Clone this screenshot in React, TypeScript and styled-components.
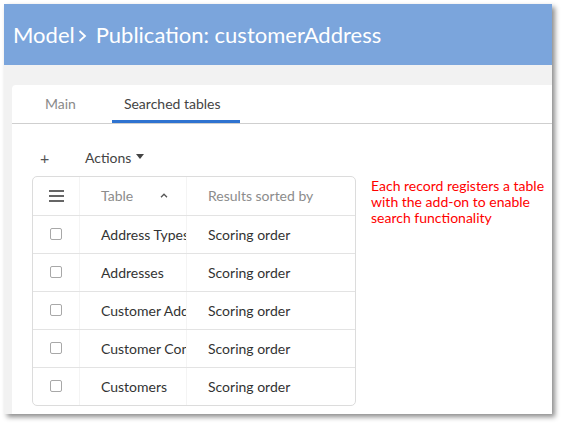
import React from "react";
import styled, { createGlobalStyle } from "styled-components";

const Global = createGlobalStyle`
  html, body { margin: 0; padding: 0; background: #ffffff; }
  body { font-family: Lato, "Open Sans", sans-serif; overflow: hidden; }
  * { box-sizing: border-box; }
`;

const Page = styled.div`
  width: 561px;
  height: 424px;
  padding: 4px 0 0 4px;
`;

const Window = styled.div`
  width: 548px;
  height: 410px;
  background: #f2f2f2;
  box-shadow: 3px 3px 5px rgba(0, 0, 0, 0.45);
  display: flex;
  flex-direction: column;
  overflow: hidden;
`;

const Header = styled.div`
  height: 61px;
  background: #7ba5dc;
  color: #ffffff;
  font-size: 22px;
  display: flex;
  align-items: center;
  padding: 0 0 1px 9px;
  white-space: pre;
`;

const Chevron = styled.svg`
  width: 9px;
  height: 12px;
  margin: 3px 9px 0 3px;
`;

const Body = styled.div`
  flex: 1;
  padding: 20px 0 0 8px;
  display: flex;
`;

const Card = styled.div`
  flex: 1;
  background: #ffffff;
  border-radius: 4px 0 0 0;
  display: flex;
  flex-direction: column;
`;

const Tabs = styled.div`
  display: flex;
  border-bottom: 1px solid #cfcfcf;
  padding-left: 19px;
  height: 39px;
`;

const Tab = styled.div<{ $active?: boolean }>`
  font-size: 14px;
  color: ${(p) => (p.$active ? "#444" : "#8a8a8a")};
  padding: 2px 14px 0 ${(p) => (p.$active ? "12px" : "14px")};
  min-width: ${(p) => (p.$active ? "128px" : "auto")};
  display: flex;
  align-items: center;
  margin-right: ${(p) => (p.$active ? "0" : "22px")};
  border-bottom: 3px solid ${(p) => (p.$active ? "#2f73d0" : "transparent")};
`;

const Content = styled.div`
  padding: 19px 0 0 20px;
  display: flex;
  flex-direction: column;
`;

const Toolbar = styled.div`
  display: flex;
  align-items: center;
  height: 28px;
  color: #444;
  font-size: 14px;
`;

const Plus = styled.span`
  font-size: 16px;
  width: 53px;
  padding-left: 8px;
  color: #555;
`;

const Caret = styled.span`
  display: inline-block;
  width: 0;
  height: 0;
  border-left: 4.5px solid transparent;
  border-right: 4.5px solid transparent;
  border-top: 5px solid #444;
  margin-left: 5px;
  position: relative;
  top: -1px;
`;

const Row = styled.div`
  display: flex;
  margin-top: 5px;
`;

const Table = styled.div`
  width: 324px;
  border: 1px solid #dcdcdc;
  border-radius: 5px;
  overflow: hidden;
`;

const TRow = styled.div<{ $head?: boolean }>`
  display: grid;
  grid-template-columns: 47px 107px 1fr;
  height: 38px;
  border-top: ${(p) => (p.$head ? "none" : "1px solid #e3e3e3")};
`;

const Cell = styled.div<{ $head?: boolean }>`
  display: flex;
  align-items: center;
  font-size: 14px;
  color: ${(p) => (p.$head ? "#8c8c8c" : "#333")};
  padding-left: 21px;
  padding-bottom: 1px;
  white-space: nowrap;
  overflow: hidden;
  border-right: 1px solid #f4f4f4;
  &:last-child { border-right: none; }
`;

const IconCell = styled(Cell)`
  padding-left: 16px;
`;

const Check = styled.span`
  width: 12px;
  height: 12px;
  border: 1px solid #a8a8a8;
  border-radius: 2px;
  margin-left: 1px;
`;

const Menu = styled.span`
  display: flex;
  flex-direction: column;
  gap: 3px;
  width: 15px;
  span { height: 2px; background: #666; display: block; }
`;

const SortUp = styled.svg`
  margin-left: 27px;
  width: 8px;
  height: 5px;
`;

const Note = styled.div`
  color: #ff0000;
  font-size: 14px;
  line-height: 16px;
  padding: 0 0 0 15px;
  margin-top: 2px;
`;

const rows = ["Address Types", "Addresses", "Customer Address", "Customer Contacts", "Customers"];

export default function App() {
  return (
    <Page>
      <Global />
      <Window>
        <Header>
          Model
          <Chevron viewBox="0 0 9 12">
            <path d="M1.5 1 L7 6 L1.5 11" fill="none" stroke="#fff" strokeWidth="1.8" />
          </Chevron>
          Publication: customerAddress
        </Header>
        <Body>
          <Card>
            <Tabs>
              <Tab>Main</Tab>
              <Tab $active>Searched tables</Tab>
            </Tabs>
            <Content>
              <Toolbar>
                <Plus>+</Plus>
                <span>Actions</span>
                <Caret />
              </Toolbar>
              <Row>
                <Table>
                  <TRow $head>
                    <IconCell $head>
                      <Menu><span /><span /><span /></Menu>
                    </IconCell>
                    <Cell $head>
                      Table
                      <SortUp viewBox="0 0 8 5">
                        <path d="M1 4.2 L4 1.2 L7 4.2" fill="none" stroke="#555" strokeWidth="1.3" />
                      </SortUp>
                    </Cell>
                    <Cell $head>Results sorted by</Cell>
                  </TRow>
                  {rows.map((r) => (
                    <TRow key={r}>
                      <IconCell><Check /></IconCell>
                      <Cell>{r}</Cell>
                      <Cell>Scoring order</Cell>
                    </TRow>
                  ))}
                </Table>
                <Note>
                  Each record registers a table<br />
                  with the add-on to enable<br />
                  search functionality
                </Note>
              </Row>
            </Content>
          </Card>
        </Body>
      </Window>
    </Page>
  );
}
